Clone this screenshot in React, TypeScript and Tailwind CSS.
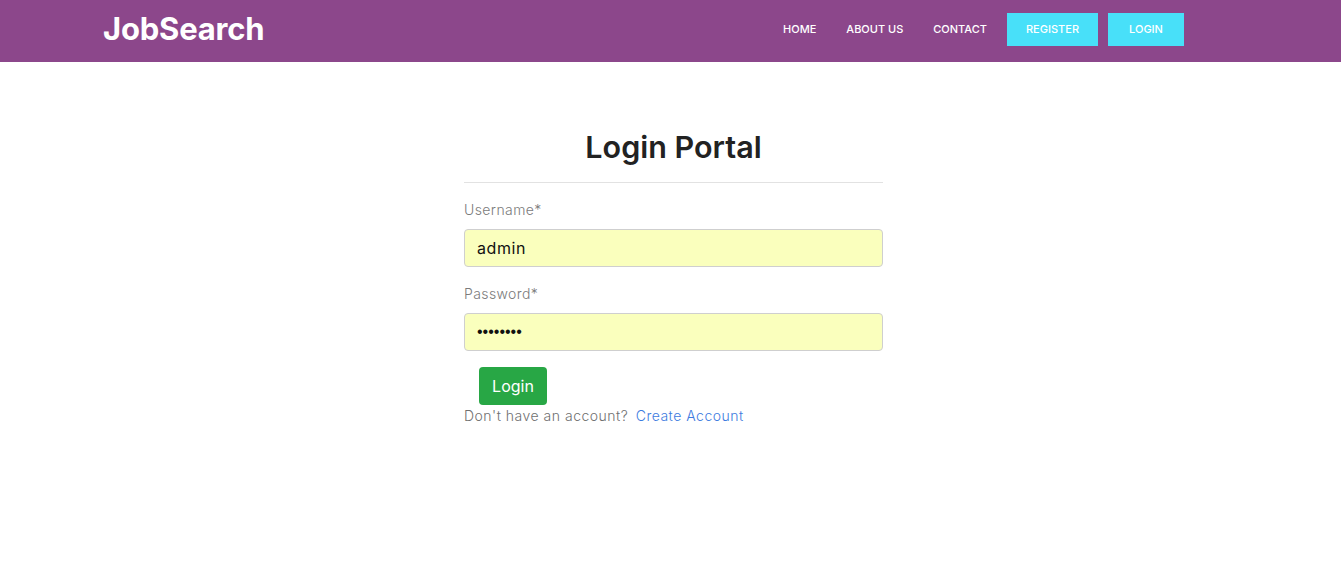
import { useState } from "react";

const navLinks = ["HOME", "ABOUT US", "CONTACT"];

export default function App() {
  const [username, setUsername] = useState("admin");
  const [password, setPassword] = useState("password");

  return (
    <div className="min-h-[574px] bg-white font-['Inter',sans-serif]">
      {/* Header */}
      <header className="h-[62px] bg-[#8c478b]">
        <div className="flex h-full items-center justify-between pb-[3px] pl-[103px] pr-[157px]">
          <a href="#" className="text-[31px] font-bold tracking-[-0.2px] text-white">
            JobSearch
          </a>
          <nav className="flex items-center text-[11px] font-medium text-white">
            {navLinks.map((link, i) => (
              <a
                key={link}
                href="#"
                className={i === navLinks.length - 1 ? "mr-[20px]" : "mr-[30px]"}
              >
                {link}
              </a>
            ))}
            <a
              href="#"
              className="flex h-[33px] w-[91px] items-center justify-center bg-[#48e0f9] text-white"
            >
              REGISTER
            </a>
            <a
              href="#"
              className="ml-[10px] flex h-[33px] w-[76px] items-center justify-center bg-[#48e0f9] text-white"
            >
              LOGIN
            </a>
          </nav>
        </div>
      </header>

      {/* Login form */}
      <main className="flex justify-center pl-[6px] pt-[64px]">
        <div className="w-[419px]">
          <h1 className="text-center text-[30.5px] font-semibold leading-[42px] text-[#222222]">
            Login Portal
          </h1>
          <hr className="mt-[14px] border-t border-[#e2e2e2]" />

          <label className="mt-[17px] block text-[14px] font-light leading-[20px] tracking-[0.4px] text-[#7b7b7b]">
            Username*
          </label>
          <input
            value={username}
            onChange={(e) => setUsername(e.target.value)}
            className="mt-[9px] block h-[38px] w-full rounded-[4px] border border-[#cfcfcf] bg-[#faffbd] px-[12px] text-[16px] tracking-[0.6px] text-[#111] outline-none"
          />

          <label className="mt-[17px] block text-[14px] font-light leading-[20px] tracking-[0.4px] text-[#7b7b7b]">
            Password*
          </label>
          <input
            type="password"
            value={password}
            onChange={(e) => setPassword(e.target.value)}
            className="mt-[9px] block h-[38px] w-full rounded-[4px] border border-[#cfcfcf] bg-[#faffbd] px-[12px] font-['Liberation_Sans',sans-serif] text-[16px] text-[#111] outline-none"
          />

          <button className="ml-[15px] mt-[16px] h-[38px] w-[68px] rounded-[4px] bg-[#28a745] text-[16px] text-white">
            Login
          </button>

          <p className="text-[14px] font-light leading-[22px] tracking-[0.5px] text-[#707070]">
            Don't have an account?{" "}
            <a href="#" className="ml-[3px] text-[#3d7be0]">
              Create Account
            </a>
          </p>
        </div>
      </main>
    </div>
  );
}
